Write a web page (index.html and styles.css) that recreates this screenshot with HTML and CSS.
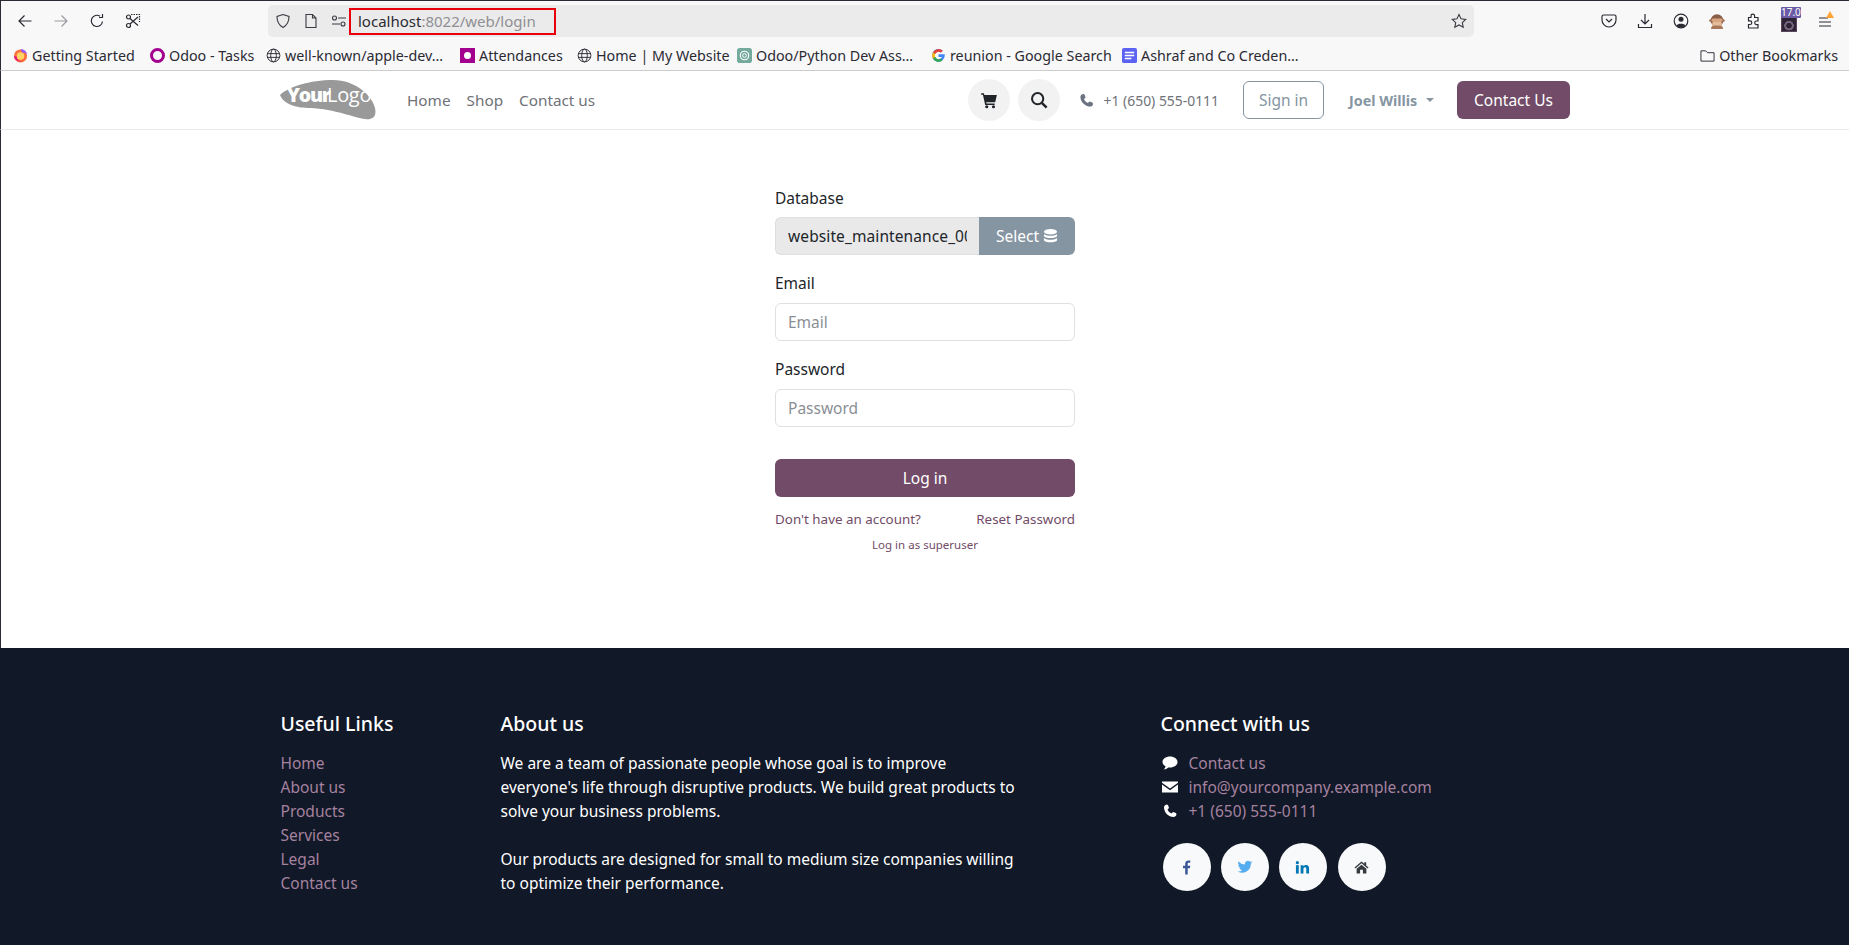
FILE: index.html
```html
<!DOCTYPE html>
<html lang="en">
<head>
<meta charset="utf-8">
<title>Login</title>
<link rel="stylesheet" href="styles.css">
</head>
<body>
<header class="chrome">
  <div class="toolbar">
    <div class="tb-left">
      <svg class="tb" viewBox="0 0 16 16"><path d="M14.500 8H2M7.500 2.500 2 8l5.500 5.500"/></svg>
      <svg class="tb dim" viewBox="0 0 16 16"><path d="M1.500 8H14M8.500 2.500 14 8l-5.500 5.500"/></svg>
      <svg class="tb" viewBox="0 0 16 16"><path d="M13.500 8.500A5.600 5.600 0 1 1 11 3.200M13.500 1v3.500H10"/></svg>
      <svg class="tb" viewBox="0 0 16 16"><path stroke-dasharray="1.500 1" d="M6 1.500h8.500V9"/><circle cx="3.500" cy="4" r="2"/><circle cx="3.500" cy="12.500" r="2"/><path d="M5 5.500 13 12.500M5 11 13 4"/></svg>
    </div>
    <div class="urlbar">
      <svg class="ub" viewBox="0 0 16 16"><path d="M8 1.500 14 3.500c0 5-1.500 8.500-6 11-4.500-2.500-6-6-6-11z"/></svg>
      <svg class="ub" viewBox="0 0 16 16"><path d="M3 1.500h6.500l3.500 3.500v9.500H3zM9.500 1.500V5H13"/></svg>
      <svg class="ub" viewBox="0 0 16 16"><path d="M7 5h8M1 11h8"/><circle cx="3.500" cy="5" r="2"/><circle cx="12" cy="11" r="2"/></svg>
      <div class="url"><span class="host">localhost</span><span class="rest">:8022/web/login</span></div>
      <svg class="ub star" viewBox="0 0 16 16"><path d="m8 1.500 2 4.300 4.700.6-3.400 3.200.9 4.700L8 12l-4.200 2.300.9-4.700L1.300 6.400 6 5.800z"/></svg>
    </div>
    <div class="tb-right">
      <svg class="tb" viewBox="0 0 16 16"><path d="M2.500 2h11A1.500 1.500 0 0 1 15 3.500V7a7 7 0 0 1-14 0V3.500A1.500 1.500 0 0 1 2.500 2zM5 6l3 3 3-3"/></svg>
      <svg class="tb" viewBox="0 0 16 16"><path d="M8 1v9.500M4 7l4 4 4-4M1.500 11v3.500h13V11"/></svg>
      <svg class="tb" viewBox="0 0 16 16"><circle cx="8" cy="8" r="6.800"/><circle class="solid" cx="8" cy="6.200" r="2.500"/><path class="solid" d="M3.500 12.500c1-2.500 8-2.500 9 0-2 2.500-7 2.500-9 0z"/></svg>
      <svg class="tb plain" viewBox="0 0 16 16"><circle cx="1.800" cy="7.500" r="1.600" fill="#a9785a"/><circle cx="14.200" cy="7.500" r="1.600" fill="#a9785a"/><circle cx="8" cy="7.500" r="6.300" fill="#8a5f4a"/><ellipse cx="8" cy="11" rx="4.800" ry="3.200" fill="#e6bd9a"/><rect x="2.500" y="5.500" width="11" height="3.500" rx="1.700" fill="#d8a67e"/><path d="M2 16c0-2 1-3.500 3-3.500h6c2 0 3 1.500 3 3.500z" fill="#a9785a"/></svg>
      <svg class="tb" viewBox="0 0 16 16"><path d="M6 4.500V3a1.800 1.800 0 0 1 3.600 0v1.500H13V8h-1.500a1.800 1.800 0 0 0 0 3.600H13v3.400H3.500v-3.500H5a1.800 1.800 0 0 0 0-3.600H3.500V4.500z"/></svg>
      <div class="ext"><span class="ext-badge">17.0</span><span class="ext-ring"></span></div>
      <div class="menu"><svg class="tb" viewBox="0 0 16 16"><path d="M2 4h9M2 8h12M2 12h12"/></svg><span class="alert"></span></div>
    </div>
  </div>
  <div class="bookmarks">
    <span class="bm"><svg class="fav" viewBox="0 0 16 16"><circle cx="8" cy="8.500" r="7" fill="#ff7139"/><circle cx="8" cy="8.500" r="4" fill="#ffd567"/><path d="M8 1a7 7 0 0 1 7 7c0-2-3-4-5-3z" fill="#9059ff"/><path d="M1 8.500c1 5 6 7 10 5.500-4 .5-7-1-7-5z" fill="#e31587"/></svg>Getting Started</span>
    <span class="bm"><span class="ring"></span>Odoo - Tasks</span>
    <span class="bm"><svg class="fav line" viewBox="0 0 16 16"><circle cx="8" cy="8" r="6.800"/><ellipse cx="8" cy="8" rx="3" ry="6.800"/><path d="M1.500 6h13M1.500 10h13"/></svg>well-known/apple-dev…</span>
    <span class="bm"><span class="square"><span class="dot"></span></span>Attendances</span>
    <span class="bm"><svg class="fav line" viewBox="0 0 16 16"><circle cx="8" cy="8" r="6.800"/><ellipse cx="8" cy="8" rx="3" ry="6.800"/><path d="M1.500 6h13M1.500 10h13"/></svg>Home | My Website</span>
    <span class="bm"><svg class="fav" viewBox="0 0 16 16"><rect width="16" height="16" rx="3" fill="#74aa9c"/><circle cx="8" cy="8" r="4.500" fill="none" stroke="#fff" stroke-width="1.200"/><circle cx="8" cy="8" r="2" fill="none" stroke="#fff"/></svg>Odoo/Python Dev Ass…</span>
    <span class="bm"><svg class="fav" viewBox="0 0 16 16"><path d="M14.500 6.700H8V9.500h3.700A4 4 0 1 1 10.600 4.900l2-2A6.800 6.800 0 1 0 14.700 8z" fill="#4285f4"/><path d="M2.100 4.600 4.500 6.400A4 4 0 0 1 10.600 4.900l2-2A6.800 6.800 0 0 0 2.100 4.600z" fill="#ea4335"/><path d="M1.200 8a6.800 6.800 0 0 0 .9 3.400l2.400-1.800a4 4 0 0 1 0-3.200L2.100 4.600A6.800 6.800 0 0 0 1.200 8z" fill="#fbbc05"/><path d="M2.100 11.400A6.800 6.800 0 0 0 12.300 13L10 11.200A4 4 0 0 1 4.500 9.600z" fill="#34a853"/></svg>reunion - Google Search</span>
    <span class="bm"><svg class="fav" viewBox="0 0 16 16"><rect width="16" height="16" rx="2" fill="#5c63f2"/><path d="M3 4h10v1.600H3zM3 7.200h10v1.600H3zM3 10.400h7V12H3z" fill="#fff"/></svg>Ashraf and Co Creden…</span>
    <span class="bm other"><svg class="fav line" viewBox="0 0 16 16"><path d="M1 3h5l2 2h7v9H1z"/></svg>Other Bookmarks</span>
  </div>
</header>

<nav class="nav">
  <div class="nav-in">
    <svg class="logo" viewBox="0 0 96 40"><path d="M0 15C8 7 30 0 53 0 75 0 92 15 95 28 97 37 92 40 85 39 75 38 55 29 30 28 18 28 4 25 0 15z" fill="#999"/><text x="7" y="22" class="logo-b">Your</text><text x="47" y="22" class="logo-l">Logo</text></svg>
    <a class="nl first">Home</a><a class="nl">Shop</a><a class="nl">Contact us</a>
    <span class="spacer"></span>
    <span class="circ"><svg class="ic" viewBox="0 0 16 16"><path d="M1 2h2.500l.4 1.500H15l-1.500 6.500H5.500l.3 1.200H13v1.300H4.600L2.600 3.300H1z" fill="#212529"/><circle cx="6" cy="14" r="1.400" fill="#212529"/><circle cx="12" cy="14" r="1.400" fill="#212529"/></svg></span>
    <span class="circ"><svg class="ic" viewBox="0 0 16 16"><circle cx="6.800" cy="6.800" r="5" fill="none" stroke="#212529" stroke-width="1.800"/><path d="m10.500 10.500 4.300 4.300" stroke="#212529" stroke-width="2.200"/></svg></span>
    <svg class="ph" viewBox="0 0 16 16"><path d="M4.200 1 6 1.600 7 5 5.300 6.500c.6 1.700 2.500 3.700 4.200 4.200L11 9l3.400 1.100.6 1.900c-.4 1.400-1.700 2.500-3 2.500C6.500 14.500 1.500 9.500 1.500 4 1.500 2.700 2.800 1.400 4.200 1z" fill="#6b7280"/></svg>
    <span class="tel">+1 (650) 555-0111</span>
    <a class="signin">Sign in</a>
    <a class="user">Joel Willis<span class="caret"></span></a>
    <a class="cta">Contact Us</a>
  </div>
</nav>

<main class="main">
  <form class="form">
    <label class="lb top">Database</label>
    <div class="group"><div class="dbv"><span class="dbt">website_maintenance_00</span></div><div class="sel">Select <svg class="dbi" viewBox="0 0 16 16"><ellipse cx="8" cy="3.500" rx="7" ry="3"/><path d="M1 5.500c1 3 13 3 14 0v2.500c-1 3-13 3-14 0zM1 9.800c1 3 13 3 14 0v2.700c-1 3-13 3-14 0z"/></svg></div></div>
    <label class="lb">Email</label>
    <div class="inp">Email</div>
    <label class="lb">Password</label>
    <div class="inp">Password</div>
    <button class="login" type="button">Log in</button>
    <div class="links"><a>Don't have an account?</a><a>Reset Password</a></div>
    <a class="su">Log in as superuser</a>
  </form>
</main>

<footer class="foot">
  <div class="foot-in">
    <div class="c1">
      <h5 class="fh">Useful Links</h5>
      <ul class="ll"><li>Home</li><li>About us</li><li>Products</li><li>Services</li><li>Legal</li><li>Contact us</li></ul>
    </div>
    <div class="c2">
      <h5 class="fh">About us</h5>
      <p class="pp">We are a team of passionate people whose goal is to improve everyone's life through disruptive products. We build great products to solve your business problems.</p>
      <p class="pp">Our products are designed for small to medium size companies willing to optimize their performance.</p>
    </div>
    <div class="c3">
      <h5 class="fh">Connect with us</h5>
      <ul class="ll cl">
        <li><svg class="ci" viewBox="0 0 16 16"><path d="M8 1.500c4.200 0 7.500 2.400 7.500 5.500S12.200 12.500 8 12.500c-.6 0-1.200 0-1.700-.1C5 13.500 3.500 14.300 1.700 14.500c1-1 1.700-2 1.900-3.200C1.800 10.300.5 8.800.5 7 .5 3.900 3.800 1.500 8 1.500z"/></svg>Contact us</li>
        <li><svg class="ci" viewBox="0 0 16 16"><path d="M0 2.500h16v1.300L8 9.500 0 3.800zM0 5.500l8 5.700 8-5.700v8H0z"/></svg>info@yourcompany.example.com</li>
        <li><svg class="ci" viewBox="0 0 16 16"><path d="M4.500 1.500 6 2 7 5 5.500 6.500c.6 1.700 2.300 3.400 4 4L11 9l3 1 .5 1.500c-.4 1.300-1.500 2.500-3 2.500C6.500 14 2 9.500 2 4.500 2 3 3.200 1.900 4.500 1.500z"/></svg>+1 (650) 555-0111</li>
      </ul>
      <div class="soc">
        <span class="sc"><svg class="si" viewBox="0 0 16 16"><path d="M9.300 15.500V8.700h2.300l.4-2.700H9.300V4.300c0-.8.200-1.300 1.300-1.300H12V.6C11.700.5 11 .5 10.100.5 8 .5 6.600 1.700 6.600 4V6H4.300v2.700h2.300v6.800z" fill="#3b5998"/></svg></span>
        <span class="sc"><svg class="si tw" viewBox="0 0 24 24"><path d="M23 4.900a9 9 0 0 1-2.600.7 4.500 4.500 0 0 0 2-2.500 9 9 0 0 1-2.900 1.100 4.500 4.500 0 0 0-7.700 4.100A12.800 12.800 0 0 1 2.500 3.600a4.500 4.500 0 0 0 1.400 6 4.500 4.500 0 0 1-2-.6 4.500 4.500 0 0 0 3.600 4.500 4.500 4.500 0 0 1-2 .1 4.500 4.500 0 0 0 4.200 3.100A9 9 0 0 1 1 18.600 12.800 12.800 0 0 0 20.700 7.200 9 9 0 0 0 23 4.900z" fill="#55acee"/></svg></span>
        <span class="sc"><svg class="si" viewBox="0 0 16 16"><rect x="1" y="5.500" width="3" height="9" fill="#0077b5"/><circle cx="2.500" cy="2.800" r="1.700" fill="#0077b5"/><path d="M6 5.500h2.900v1.300c.5-.9 1.600-1.500 2.900-1.500 2.500 0 3.200 1.600 3.200 4v5.200h-3V9.800c0-1.100-.2-2-1.300-2s-1.700.8-1.700 2v4.700H6z" fill="#0077b5"/></svg></span>
        <span class="sc last"><svg class="si" viewBox="0 0 16 16"><path d="M8 1.500 0.500 8l1 1L8 3.500 14.500 9l1-1-2.500-2.200V2.500h-2v1.600zM8 5 2.800 9.400V14.500H6.500V10.500h3v4h3.700V9.400z" fill="#343a40"/></svg></span>
      </div>
    </div>
  </div>
</footer>
</body>
</html>
```

FILE: styles.css
```css
* { box-sizing: border-box; }
html, body { margin: 0; padding: 0; }
body { width: 1849px; height: 945px; overflow: hidden; display: flex; flex-direction: column; background: #fff; font-family: "Noto Sans", sans-serif; font-size: 15.5px; color: #212529; }
a { text-decoration: none; }

.chrome { height: 71px; flex: none; background: #f8f8f9; border-top: 1px solid #2b2a33; border-left: 1px solid #2b2a33; border-bottom: 1px solid #ccc; }
.toolbar { height: 36px; display: flex; align-items: center; padding-top: 4px; }
.tb-left { width: 267px; height: 32px; display: flex; align-items: center; gap: 20px; padding-left: 16px; }
.tb { width: 16px; height: 16px; flex: none; fill: none; stroke: #2b2a33; stroke-width: 1.200; }
.tb.dim { stroke: #9a9aa0; }
.tb.plain { stroke: none; }
.tb .solid { fill: #2b2a33; stroke: none; }
.urlbar { width: 1206px; height: 32px; flex: none; background: #ebebeb; border-radius: 5px; display: flex; align-items: center; padding-left: 7px; padding-right: 7px; }
.ub { width: 16px; height: 16px; flex: none; fill: none; stroke: #3a3a42; stroke-width: 1.100; margin-right: 12px; }
.ub:nth-child(3) { margin-right: 2px; }
.ub.star { margin: 0 0 0 auto; }
.url { width: 207px; height: 27px; border: 2px solid #e8000d; display: flex; align-items: center; padding-left: 7px; font-size: 15px; }
.host { color: #2b2a33; }
.rest { color: #8f8f94; }
.tb-right { flex: 1; height: 32px; display: flex; align-items: center; justify-content: flex-end; gap: 20px; padding-right: 16px; }
.ext { width: 16px; height: 24px; position: relative; display: flex; align-items: flex-end; margin-top: -2px; }
.ext-ring { width: 16px; height: 16px; background: radial-gradient(circle at 50% 62%, #2d2536 0 2.500px, #75657c 3px 4.500px, #2d2536 5px); display: block; border: 1px solid #5d4560; }
.ext-badge { position: absolute; left: 0; top: -1px; width: 20px; height: 11px; overflow: hidden; background: #6b5aa6; color: #fff; font-size: 10px; line-height: 11px; z-index: 1; border-radius: 1px; }
.menu { position: relative; width: 16px; height: 16px; }
.alert { position: absolute; right: -1px; top: -2px; width: 0; height: 0; border-left: 4px solid transparent; border-right: 4px solid transparent; border-bottom: 7px solid #ffa436; }

.bookmarks { height: 33px; display: grid; grid-template-columns: 137px 116px 194px 117px 160px 194px 191px 1fr auto; align-items: center; padding: 3px 11px 0 12px; font-size: 14.300px; color: #2b2a33; }
.bm { display: flex; align-items: center; white-space: nowrap; }
.bm.other { justify-self: end; }
.fav { width: 15px; height: 15px; flex: none; margin-right: 4px; }
.fav.line { fill: none; stroke: #2b2a33; stroke-width: 1; }
.ring { width: 15px; height: 15px; border: 3px solid #a3008f; border-radius: 50%; margin-right: 4px; flex: none; }
.square { width: 15px; height: 15px; background: #a3008f; display: flex; align-items: center; justify-content: center; margin-right: 4px; flex: none; }
.dot { width: 7px; height: 7px; border-radius: 50%; background: #fff; }

.nav { height: 59px; flex: none; background: #fff; border-left: 1px solid #2b2a33; border-bottom: 1px solid #e9ecef; }
.nav-in { width: 1320px; margin: 0 auto; height: 58px; display: flex; align-items: center; padding: 0 15px; }
.logo { width: 96px; height: 40px; flex: none; margin-right: 31px; }
.logo-b { font: 800 19.500px "Open Sans", sans-serif; letter-spacing: -1.200px; fill: #fff; }
.logo-l { font: 400 20px "Open Sans", sans-serif; letter-spacing: -.300px; fill: #fff; }
.nl { color: #6f7278; margin-right: 16px; font-size: 15.300px; }
.spacer { flex: 1; }
.circ { width: 42px; height: 42px; border-radius: 50%; background: #f2f2f2; display: flex; align-items: center; justify-content: center; margin-right: 8px; }
.ic { width: 18px; height: 18px; }
.ph { width: 15px; height: 15px; margin-left: 11px; margin-right: 10px; }
.tel { color: #6f7278; font-size: 13.900px; margin-right: 24px; }
.signin { width: 81px; height: 38px; border: 1px solid #8595a2; border-radius: 6px; color: #8595a2; display: flex; align-items: center; justify-content: center; }
.user { color: #8595a2; font-weight: 700; font-size: 14.300px; margin-left: 25px; width: 108px; display: flex; align-items: center; }
.caret { margin-left: 9px; width: 0; height: 0; border-left: 4px solid transparent; border-right: 4px solid transparent; border-top: 4px solid #8595a2; }
.cta { width: 113px; height: 38px; border-radius: 6px; background: #714b67; color: #fff; display: flex; align-items: center; justify-content: center; }

.main { height: 518px; flex: none; background: #fff; border-left: 1px solid #2b2a33; display: flex; justify-content: center; padding-top: 56px; }
.form { width: 300px; display: flex; flex-direction: column; }
.lb { height: 24px; line-height: 24px; margin-bottom: 8px; display: block; color: #212529; }
.lb.top { margin-bottom: 7px; }
.group { height: 38px; display: flex; margin-bottom: 16px; }
.dbv { width: 204px; background: #e9e9e9; border: 1px solid #dedede; border-right: 0; border-radius: 6px 0 0 6px; padding: 0 12px; display: flex; align-items: center; overflow: hidden; }
.dbt { display: block; width: 179px; overflow: hidden; white-space: nowrap; letter-spacing: .1px; }
.sel { width: 96px; background: #8595a2; color: #fff; border-radius: 0 6px 6px 0; display: flex; align-items: center; justify-content: center; gap: 4px; }
.dbi { width: 15px; height: 16px; fill: #fff; }
.inp { height: 38px; border: 1px solid #e0e0e0; border-radius: 6px; padding: 0 12px; display: flex; align-items: center; color: #8a8f95; margin-bottom: 16px; background: #fff; }
.login { height: 38px; margin-top: 16px; border: 0; border-radius: 6px; background: #714b67; color: #fff; font: inherit; }
.links { display: flex; justify-content: space-between; margin-top: 12px; font-size: 13.400px; line-height: 20px; color: #714b67; }
.su { text-align: center; font-size: 11.500px; margin-top: 7px; line-height: 18px; color: #714b67; }

.foot { flex: 1; background: #111827; color: #fff; }
.foot-in { width: 1320px; margin: 0 auto; display: flex; padding-top: 64px; }
.c1 { width: 220px; padding: 0 16px; }
.c2 { width: 660px; padding: 0 16px 0 16px; }
.c3 { width: 330px; padding: 0 16px; margin-left: 0; }
.fh { margin: 0 0 15px; font-size: 19.500px; font-weight: 500; line-height: 24px; }
.ll { list-style: none; margin: 0; padding: 0; color: #a5829f; }
.ll li { height: 24px; line-height: 24px; display: flex; align-items: center; }
.pp { margin: 0 0 24px; width: 520px; line-height: 24px; }
.ci { width: 16px; height: 16px; fill: #fff; margin-right: 11px; margin-left: 1px; }
.soc { display: flex; gap: 10px; margin-top: 20px; padding-left: 2px; }
.sc { width: 48px; height: 48px; border-radius: 50%; background: #f8f9fa; display: flex; align-items: center; justify-content: center; }
.sc.last { margin-left: 1px; }
.si { width: 15px; height: 15px; }
.si.tw { width: 16px; height: 16px; }
```
